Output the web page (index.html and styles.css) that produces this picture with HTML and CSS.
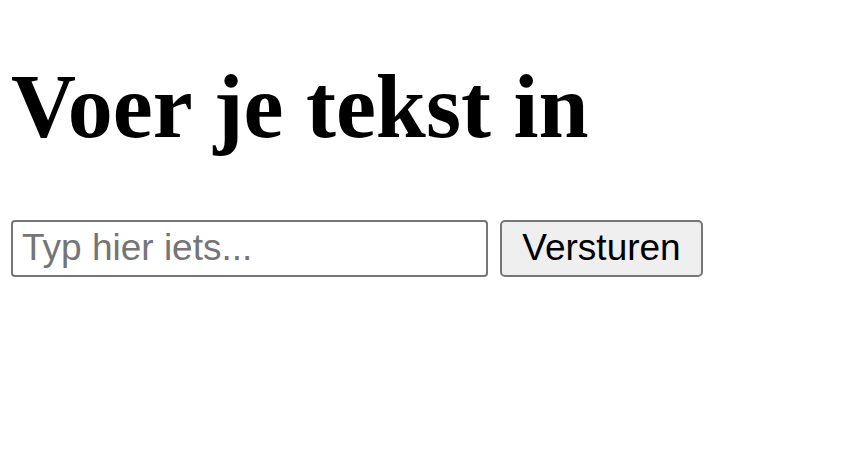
FILE: index.html
```html
<!DOCTYPE html>
<html lang="nl">
<head>
<meta charset="utf-8">
<title>Voer je tekst in</title>
<link rel="stylesheet" href="styles.css">
</head>
<body>
<main class="page">
  <h1 class="title">Voer je tekst in</h1>
  <form class="entry">
    <input class="entry-input" type="text" placeholder="Typ hier iets...">
    <button class="entry-button" type="button">Versturen</button>
  </form>
</main>
</body>
</html>
```
FILE: styles.css
```css
html, body {
  margin: 0;
  padding: 0;
  background: #ffffff;
}
.page {
  padding: 55px 0 0 11px;
}
.title {
  margin: 0;
  font-family: "Liberation Serif", "Times New Roman", serif;
  font-weight: bold;
  font-size: 90px;
  line-height: 1.15;
  color: #000;
}
.entry {
  display: flex;
  gap: 12px;
  margin-top: 61px;
}
.entry-input {
  box-sizing: border-box;
  width: 477px;
  height: 57px;
  border: 2px solid #767676;
  border-radius: 4px;
  padding: 0 9px;
  font-family: "Liberation Sans", Arial, sans-serif;
  font-size: 37px;
  color: #000;
  background: #fff;
}
.entry-input::placeholder {
  color: #757575;
}
.entry-button {
  box-sizing: border-box;
  width: 203px;
  height: 57px;
  border: 2px solid #767676;
  border-radius: 5px;
  background: #efefef;
  font-family: "Liberation Sans", Arial, sans-serif;
  font-size: 37px;
  color: #000;
  padding: 0;
}
```
